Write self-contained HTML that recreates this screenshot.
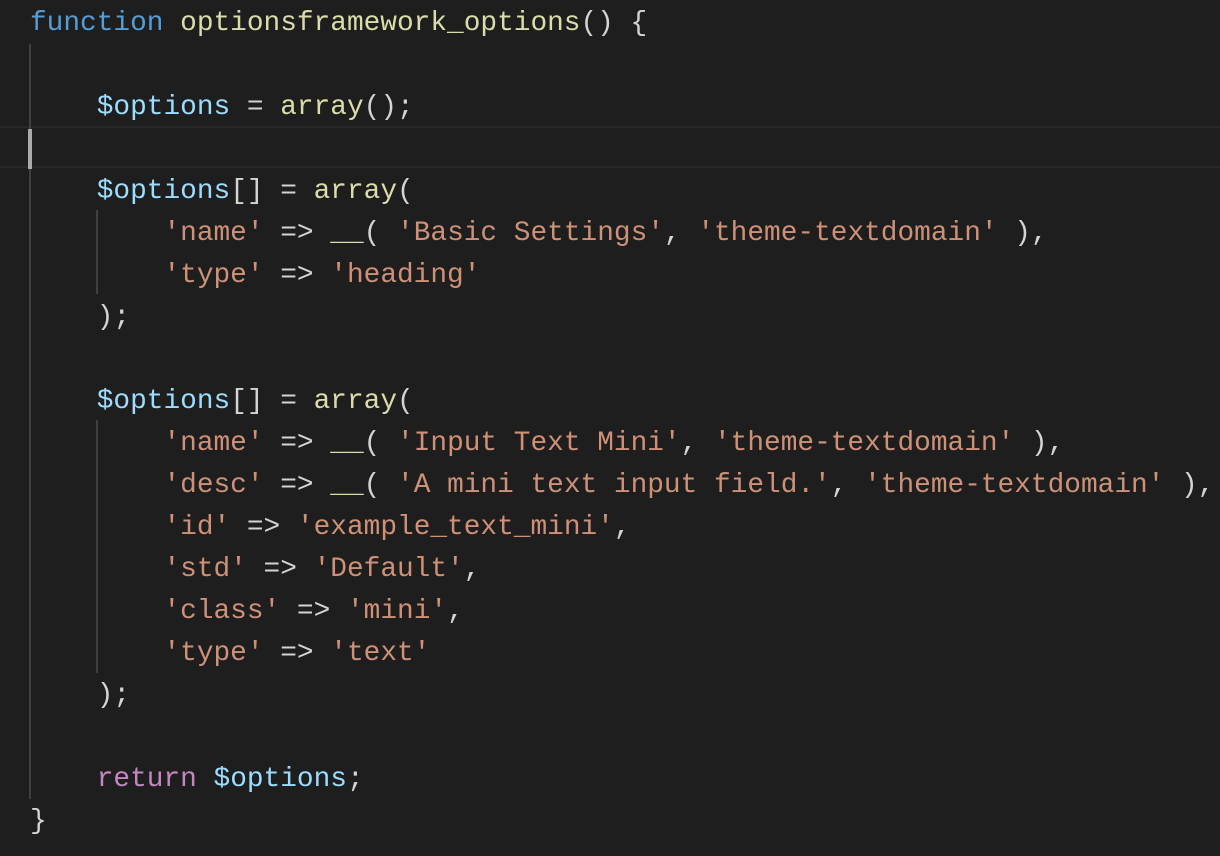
<!DOCTYPE html>
<html><head><meta charset="utf-8"><style>
html,body{margin:0;padding:0;background:#1e1e1e;width:1220px;height:856px;overflow:hidden}
.code{position:absolute;left:30px;top:3px;font-family:"Liberation Mono",monospace;font-size:27.8px;line-height:42px;color:#d4d4d4;white-space:pre}
.k{color:#569cd6}.f{color:#dcdcaa}.v{color:#9cdcfe}.s{color:#ce9178}.r{color:#c586c0}
.g{position:absolute;width:2px;background:#404040}
.cur{position:absolute;left:0;top:126px;width:1220px;height:38px;border-top:2px solid #282828;border-bottom:2px solid #282828}
</style></head><body>
<div class="cur"></div>
<div class="g" style="left:28px;top:129px;width:4px;height:40px;background:#aaa"></div>
<div class="g" style="left:29px;top:44px;height:85px"></div>
<div class="g" style="left:29px;top:169px;height:630px"></div>
<div class="g" style="left:96px;top:210px;height:84px"></div>
<div class="g" style="left:96px;top:420px;height:253px"></div>
<div class="code"><span class="k">function</span> <span class="f">optionsframework_options</span>() {

    <span class="v">$options</span> = <span class="f">array</span>();

    <span class="v">$options</span>[] = <span class="f">array</span>(
        <span class="s">'name'</span> =&gt; <span class="f">__</span>( <span class="s">'Basic Settings'</span>, <span class="s">'theme-textdomain'</span> ),
        <span class="s">'type'</span> =&gt; <span class="s">'heading'</span>
    );

    <span class="v">$options</span>[] = <span class="f">array</span>(
        <span class="s">'name'</span> =&gt; <span class="f">__</span>( <span class="s">'Input Text Mini'</span>, <span class="s">'theme-textdomain'</span> ),
        <span class="s">'desc'</span> =&gt; <span class="f">__</span>( <span class="s">'A mini text input field.'</span>, <span class="s">'theme-textdomain'</span> ),
        <span class="s">'id'</span> =&gt; <span class="s">'example_text_mini'</span>,
        <span class="s">'std'</span> =&gt; <span class="s">'Default'</span>,
        <span class="s">'class'</span> =&gt; <span class="s">'mini'</span>,
        <span class="s">'type'</span> =&gt; <span class="s">'text'</span>
    );

    <span class="r">return</span> <span class="v">$options</span>;
}</div>
</body></html>
